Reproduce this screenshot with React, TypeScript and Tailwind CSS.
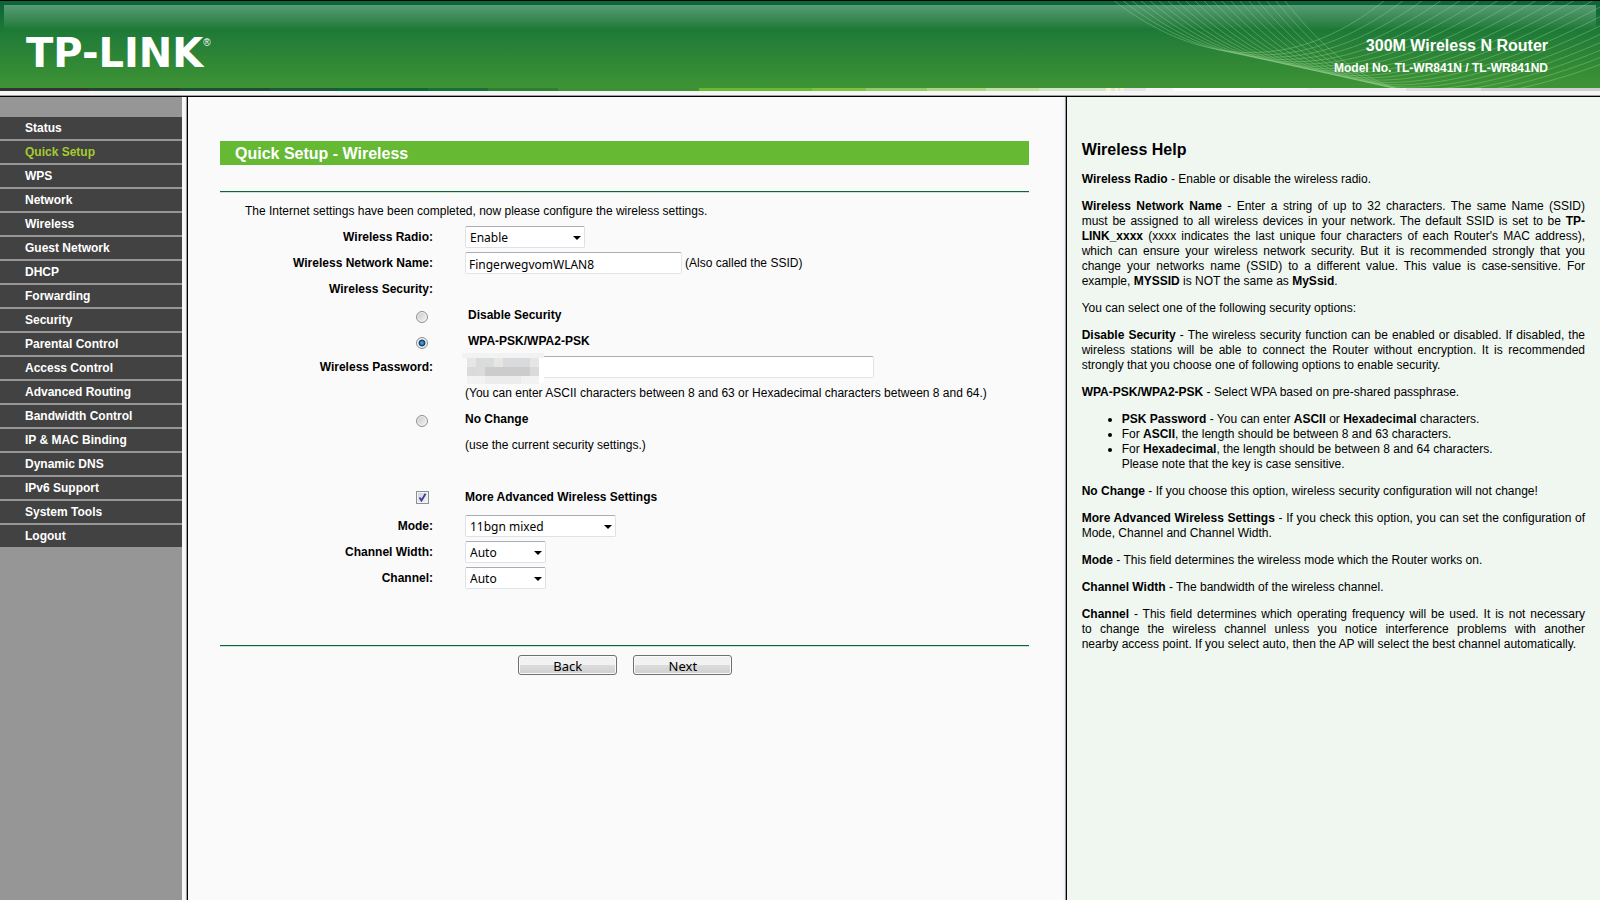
import React from "react";

const MENU_ITEMS = [
    "Status",
    "Quick Setup",
    "WPS",
    "Network",
    "Wireless",
    "Guest Network",
    "DHCP",
    "Forwarding",
    "Security",
    "Parental Control",
    "Access Control",
    "Advanced Routing",
    "Bandwidth Control",
    "IP & MAC Binding",
    "Dynamic DNS",
    "IPv6 Support",
    "System Tools",
    "Logout",
];

// colour, share of the page width
const STRIP: [string, number][] = [
    ["#333333", 89],
    ["#28402f", 91],
    ["#1d4d36", 90],
    ["#1a5a3a", 68],
    ["#0d6638", 90],
    ["#177038", 60],
    ["#2a8035", 70],
    ["#3c9035", 141],
    ["#66bb2e", 113],
    ["#7bc142", 54],
    ["#8fcb66", 61],
    ["#a9d67f", 59],
    ["#c2e0a4", 53],
    ["#d0e5c8", 67],
    ["#eff5cc", 5],
    ["#e1e1e1", 4],
    ["#eff5cc", 3],
    ["#e1e1e1", 2],
    ["#eff5cc", 4],
    ["#e5e5e5", 22],
    ["#f3f3f3", 27],
    ["#fcfcfc", 87],
    ["#f4f4f4", 48],
    ["#eeeeee", 98],
    ["#dedede", 75],
    ["#d0d0d0", 119],
];

const WAVES = Array.from({ length: 20 }, (_, i) => i);

// pixelated block over the password, row by row
const MOSAIC = [
    ["#e6e6e4", "#dadbdb", "#dadbdb", "#e6e6e4", "#d9dadb", "#d9dadb", "#d9dadb", "#e6e6e4"],
    ["#d9dadb", "#dadbdb", "#cccccc", "#cccccc", "#cccccc", "#cccccc", "#cccccc", "#d9dadb"],
    ["#f2f2f2", "#f2f2f2", "#ececec", "#ececec", "#ececec", "#ececec", "#f2f2f2", "#f2f2f2"],
];

function Header() {
    return (
        <header className="border-t border-black">
            <div className="relative flex h-[87px] items-center justify-between overflow-hidden bg-linear-to-b from-[#0d6638] from-5% via-[#1e7a37] via-35% to-[#3e9434] pl-[26px] pr-[52px]">
                <div className="absolute inset-x-1 top-1 h-6 bg-linear-to-b from-[#579c75] to-[#1e7a37]" />
                <svg className="absolute right-0 top-0" width="500" height="87" viewBox="1100 0 500 87" fill="none" aria-hidden="true">
                    {WAVES.map((i) => (
                        <path
                            key={i}
                            d={`M${1113 + 9 * i} -1 C${1195 + 9 * i} ${62 + 2 * i} ${1290 + 8 * i} ${76 + 4 * i} ${1385 + 19 * i} -1`}
                            stroke="#a8dca0"
                            strokeOpacity="0.35"
                        />
                    ))}
                </svg>
                <div className="relative flex items-start pt-4 text-white">
                    <span className="font-['DejaVu_Sans',sans-serif] text-[40px] leading-10 font-bold">TP-LINK</span>
                    <span className="pt-1 text-[10px] leading-3">®</span>
                </div>
                <div className="relative pt-[22px] text-right font-bold text-white">
                    <div className="text-base leading-5">300M Wireless N Router</div>
                    <div className="pt-1 text-xs leading-4">Model No. TL-WR841N / TL-WR841ND</div>
                </div>
            </div>
            <div className="flex h-[3px]">
                {STRIP.map(([color, share], i) => (
                    <div key={i} style={{ background: color, flexGrow: share }} />
                ))}
            </div>
            <div className="h-1 bg-[#f6f6f6]" />
            <div className="h-px bg-[#a0a0a0]" />
            <div className="h-px bg-black" />
        </header>
    );
}

function FrameBorder() {
    return <div className="w-1.5 shrink-0 border-r border-black bg-linear-to-r from-[#f7f7f9] from-50% to-[#e4e4ea] shadow-[inset_-1px_0_0_#a0a0a0]" />;
}

function Row({ label, htmlFor, control, children }: { label?: string; htmlFor?: string; control?: React.ReactNode; children?: React.ReactNode }) {
    return (
        <div className="flex h-[26px] items-center gap-8">
            <div className="flex w-[213px] shrink-0 justify-end font-bold">
                {label && <label htmlFor={htmlFor}>{label}</label>}
                {control}
            </div>
            <div className="flex items-center gap-[3px]">{children}</div>
        </div>
    );
}

function Select({ id, width, options }: { id: string; width: string; options: string[] }) {
    return (
        <div className={`relative ${width}`}>
            <select
                id={id}
                className="block h-[22px] w-full appearance-none rounded-xs border border-[#dde2e8] border-t-[#abadb3] bg-white pt-0.5 pl-1 font-['Noto_Sans',sans-serif] text-xs leading-[18px] text-black"
            >
                {options.map((option) => (
                    <option key={option}>{option}</option>
                ))}
            </select>
            <svg className="pointer-events-none absolute top-[10px] right-1" width="8" height="4" viewBox="0 0 8 4" aria-hidden="true">
                <path d="M0 0h8L4 4z" fill="#000" />
            </svg>
        </div>
    );
}

function Radio({ id, checked }: { id: string; checked?: boolean }) {
    return (
        <input
            id={id}
            type="radio"
            name="security"
            defaultChecked={checked}
            className="mt-1 mr-[5px] size-3 appearance-none rounded-full border border-[#8e8f8f] bg-linear-to-br from-[#c4c8cc] to-[#f6f6f6] shadow-[inset_0_0_0_1px_#f4f4f4] checked:bg-radial checked:from-[#3aa0dc] checked:from-15% checked:via-[#14355e] checked:via-40% checked:to-[#e0e4e8] checked:to-55%"
        />
    );
}

function QuickSetup() {
    return (
        <main className="min-w-0 flex-1 bg-[#fafafa] px-8 pt-11">
            <h1 className="h-6 bg-[#66b933] pl-[15px] text-base leading-[26px] font-bold text-white">Quick Setup - Wireless</h1>
            <form onSubmit={(e) => e.preventDefault()}>
                <div className="mt-[26px] h-[455px] border-y border-[#0d6638] pt-[11px] shadow-[inset_0_1px_0_#c4e4d0,0_1px_0_#c4e4d0]">
                    <p className="pb-[5px] pl-[25px] leading-4">
                        The Internet settings have been completed, now please configure the wireless settings.
                    </p>
                    <Row label="Wireless Radio:" htmlFor="radio">
                        <Select id="radio" width="w-[120px]" options={["Enable", "Disable"]} />
                    </Row>
                    <Row label="Wireless Network Name:" htmlFor="ssid">
                        <input
                            id="ssid"
                            type="text"
                            defaultValue="FingerwegvomWLAN8"
                            className="h-[22px] w-[217px] rounded-xs border border-[#e2e3ea] border-t-[#abadb3] bg-white px-[3px] pt-0.5 font-['Noto_Sans',sans-serif] text-xs leading-[18px]"
                        />
                        <span>(Also called the SSID)</span>
                    </Row>
                    <Row label="Wireless Security:" />
                    <Row control={<Radio id="none" />}>
                        <label htmlFor="none" className="pl-[3px] font-bold">Disable Security</label>
                    </Row>
                    <Row control={<Radio id="wpa" checked />}>
                        <label htmlFor="wpa" className="pl-[3px] font-bold">WPA-PSK/WPA2-PSK</label>
                    </Row>
                    <Row label="Wireless Password:" htmlFor="password">
                        <div className="relative">
                            <input
                                id="password"
                                type="text"
                                className="block h-[22px] w-[409px] rounded-xs border border-[#e2e3ea] border-t-[#abadb3] bg-white px-[3px]"
                            />
                            <div className="absolute -top-[3px] -left-[3px] h-[5px] w-[82px] bg-[#f2f2f2]" />
                            <div className="absolute top-[2px] -left-[3px] h-[25px] w-[82px] bg-linear-to-r from-[#fafafa] from-50% to-white to-50%" />
                            <div className="absolute top-[2px] left-[2px] h-[26px] w-[72px] overflow-hidden">
                                {MOSAIC.map((row, i) => (
                                    <div key={i} className="flex">
                                        {row.map((color, j) => (
                                            <div key={j} className="h-[9px] w-[9px]" style={{ background: color }} />
                                        ))}
                                    </div>
                                ))}
                            </div>
                        </div>
                    </Row>
                    <Row>(You can enter ASCII characters between 8 and 63 or Hexadecimal characters between 8 and 64.)</Row>
                    <Row control={<Radio id="nochange" />}>
                        <label htmlFor="nochange" className="font-bold">No Change</label>
                    </Row>
                    <Row>(use the current security settings.)</Row>
                    <Row />
                    <Row
                        control={
                            <div className="relative mr-1 size-[13px]">
                                <input
                                    id="advanced"
                                    type="checkbox"
                                    defaultChecked
                                    className="block size-[13px] appearance-none border border-[#8e8f8f] bg-linear-to-br from-[#cdd1d6] to-[#f6f6f6] shadow-[inset_0_0_0_1px_#f4f4f4]"
                                />
                                <svg className="pointer-events-none absolute inset-0" width="13" height="13" viewBox="0 0 13 13" fill="none" aria-hidden="true">
                                    <path d="M3.5 6.5l2 3L9.5 2.8" stroke="#3a3f9c" strokeWidth="1.8" />
                                </svg>
                            </div>
                        }
                    >
                        <label htmlFor="advanced" className="font-bold">More Advanced Wireless Settings</label>
                    </Row>
                    <div className="pt-[3px]">
                        <Row label="Mode:" htmlFor="mode">
                            <Select id="mode" width="w-[151px]" options={["11bgn mixed", "11bg mixed", "11n only"]} />
                        </Row>
                        <Row label="Channel Width:" htmlFor="width">
                            <Select id="width" width="w-[81px]" options={["Auto", "20MHz", "40MHz"]} />
                        </Row>
                        <Row label="Channel:" htmlFor="channel">
                            <Select id="channel" width="w-[81px]" options={["Auto", "1", "6", "11"]} />
                        </Row>
                    </div>
                </div>
                <div className="flex justify-center gap-4 pt-[9px] pb-4 pl-0.5">
                    {["Back", "Next"].map((name) => (
                        <button
                            key={name}
                            type="button"
                            className="h-5 w-[99px] rounded-[3px] border border-[#707070] bg-linear-to-b from-[#f2f2f2] from-50% via-[#dddddd] via-50% to-[#cfcfcf] pt-[2px] font-['Noto_Sans',sans-serif] text-[13px] leading-4 shadow-[inset_0_0_0_1px_#fafafa]"
                        >
                            {name}
                        </button>
                    ))}
                </div>
            </form>
        </main>
    );
}

function Help() {
    return (
        <aside className="flex w-1/3 shrink-0 flex-col gap-3 bg-[#f0f7f1] px-[15px] pt-[43px] text-justify leading-[15px]">
            <h2 className="text-base leading-5 font-bold">Wireless Help</h2>
            <p><b>Wireless Radio</b> - Enable or disable the wireless radio.</p>
            <p>
                <b>Wireless Network Name</b> - Enter a string of up to 32 characters. The same Name (SSID) must&nbsp;be assigned
                to all wireless devices in your network. The default SSID is set to be <b>TP-LINK_xxxx</b> (xxxx indicates the
                last unique four characters of each Router's MAC address), which can ensure your wireless network security. But
                it is recommended strongly that you change your networks name (SSID) to a different value. This value is
                case-sensitive. For example, <b>MYSSID</b> is NOT the same as <b>MySsid</b>.
            </p>
            <p>You can select one of the following security options:</p>
            <p>
                <b>Disable Security</b> - The wireless security function can be enabled or disabled. If disabled, the wireless
                stations will be able to connect the Router without encryption. It is recommended strongly that you choose one
                of following options to enable security.
            </p>
            <p><b>WPA-PSK/WPA2-PSK</b> - Select WPA based on pre-shared passphrase.</p>
            <ul className="list-disc pl-10">
                <li><b>PSK Password</b> - You can enter <b>ASCII</b> or <b>Hexadecimal</b> characters.</li>
                <li>For <b>ASCII</b>, the length should be between 8 and 63 characters.</li>
                <li>
                    For <b>Hexadecimal</b>, the length should be between 8 and 64 characters.
                    <br />
                    Please note that the key is case sensitive.
                </li>
            </ul>
            <p><b>No Change</b> - If you choose this option, wireless security configuration will not change!</p>
            <p>
                <b>More Advanced Wireless Settings</b> - If you check this option, you can set the configuration of Mode, Channel
                and Channel Width.
            </p>
            <p><b>Mode</b> - This field determines the wireless mode which the Router works on.</p>
            <p><b>Channel Width</b> - The bandwidth of the wireless channel.</p>
            <p>
                <b>Channel</b> - This field determines which operating frequency will be used. It is not necessary
                to&nbsp;change the wireless channel unless you notice interference problems with another nearby&nbsp;access
                point. If you select auto, then the AP will select the best channel automatically.
            </p>
        </aside>
    );
}

export default function App() {
    return (
        <div className="flex min-h-screen flex-col font-['Liberation_Sans',Arial,sans-serif] text-xs text-black">
            <Header />
            <div className="flex flex-1">
                <nav className="w-[182px] shrink-0 bg-[#969696] pt-5">
                    <ul className="flex flex-col gap-0.5">
                        {MENU_ITEMS.map((item) => (
                            <li key={item} className="bg-[#424242]">
                                <a
                                    href="#"
                                    className={`block pl-[25px] leading-[22px] font-bold ${item === "Quick Setup" ? "text-[#a2cc30]" : "text-white"}`}
                                >
                                    {item}
                                </a>
                            </li>
                        ))}
                    </ul>
                </nav>
                <FrameBorder />
                <QuickSetup />
                <FrameBorder />
                <Help />
            </div>
        </div>
    );
}
